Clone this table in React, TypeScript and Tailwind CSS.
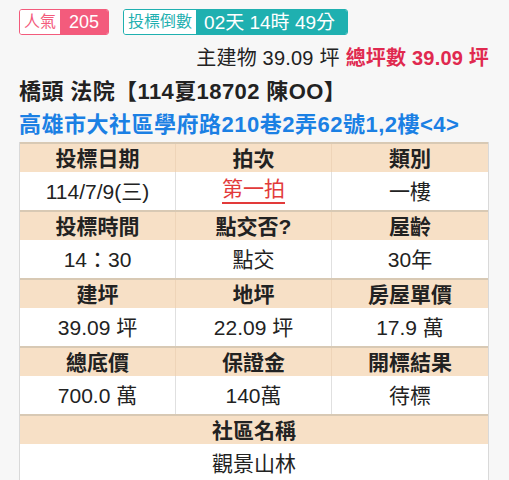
export default function App() {
  const rows = [
    { heads: ["投標日期", "拍次", "類別"], vals: ["114/7/9(三)", "第一拍", "一樓"] },
    { heads: ["投標時間", "點交否?", "屋齡"], vals: ["14：30", "點交", "30年"] },
    { heads: ["建坪", "地坪", "房屋單價"], vals: ["39.09 坪", "22.09 坪", "17.9 萬"] },
    { heads: ["總底價", "保證金", "開標結果"], vals: ["700.0 萬", "140萬", "待標"] },
  ]

  return (
    <div
      className="w-[509px] h-[480px] overflow-hidden bg-[#f7f7f7] text-[#222]"
      style={{ fontFamily: '"Liberation Sans", "Noto Sans CJK TC", sans-serif' }}
    >
      <div className="px-[19px] pt-[9px]">
        {/* badges */}
        <div className="flex items-center gap-[14px]">
          <div className="flex h-[26px] items-stretch overflow-hidden rounded-[3px] border border-[#f35b7c] leading-none">
            <span className="flex items-center bg-white px-[4px] text-[16px] text-[#f35b7c]">人氣</span>
            <span className="flex items-center bg-[#f35b7c] px-[9px] text-[18px] text-white">205</span>
          </div>
          <div className="flex h-[26px] items-stretch overflow-hidden rounded-[3px] border border-[#1fb0b0] leading-none">
            <span className="flex items-center bg-white px-[4px] text-[16px] text-[#1fb0b0]">投標倒數</span>
            <span className="flex items-center bg-[#1fb0b0] pl-[8px] pr-[12px] text-[19px] text-white">
              02天 14時 49分
            </span>
          </div>
        </div>

        <div className="mt-[11px] flex justify-end pr-[1px] text-[20px] leading-[24px] tracking-[0.2px]">
          <span>主建物 39.09 坪</span>
          <span className="ml-[6px] font-bold text-[#e0294f]">總坪數 39.09 坪</span>
        </div>

        <div className="mt-[5px] text-[22px] font-bold leading-[33px] tracking-[0.4px] text-[#222]">
          橋頭 法院【114夏18702 陳OO】
        </div>
        <div className="text-[22px] font-bold leading-[33px] tracking-[0.5px] text-[#1b80e4]">
          高雄市大社區學府路210巷2弄62號1,2樓&lt;4&gt;
        </div>

        {/* table */}
        <div className="mt-[1px] w-[470px] border-x border-[#d9d9d9] text-[21px]">
          {rows.map((r, i) => (
            <div key={i}>
              <div className="grid h-[30px] grid-cols-3 border-t-2 border-[#d8c9b4] bg-[#f7e0c6] font-bold leading-none">
                {r.heads.map((h, j) => (
                  <div
                    key={j}
                    className={`flex items-center justify-center ${j < 2 ? "border-r border-[#eed4b8]" : ""}`}
                  >
                    {h}
                  </div>
                ))}
              </div>
              <div className="grid h-[38px] grid-cols-3 bg-white leading-none">
                {r.vals.map((v, j) => (
                  <div
                    key={j}
                    className={`flex items-center justify-center ${j < 2 ? "border-r border-[#e0e0e0]" : ""}`}
                  >
                    {j === 1 && i === 0 ? (
                      <span className="border-b-2 border-[#e23a3a] pb-[3px] text-[#e23a3a]">{v}</span>
                    ) : (
                      v
                    )}
                  </div>
                ))}
              </div>
            </div>
          ))}
          <div className="flex h-[30px] items-center justify-center border-t-2 border-[#d8c9b4] bg-[#f7e0c6] font-bold leading-none">
            社區名稱
          </div>
          <div className="flex h-[38px] items-center justify-center bg-white leading-none">觀景山林</div>
        </div>
      </div>
    </div>
  )
}
